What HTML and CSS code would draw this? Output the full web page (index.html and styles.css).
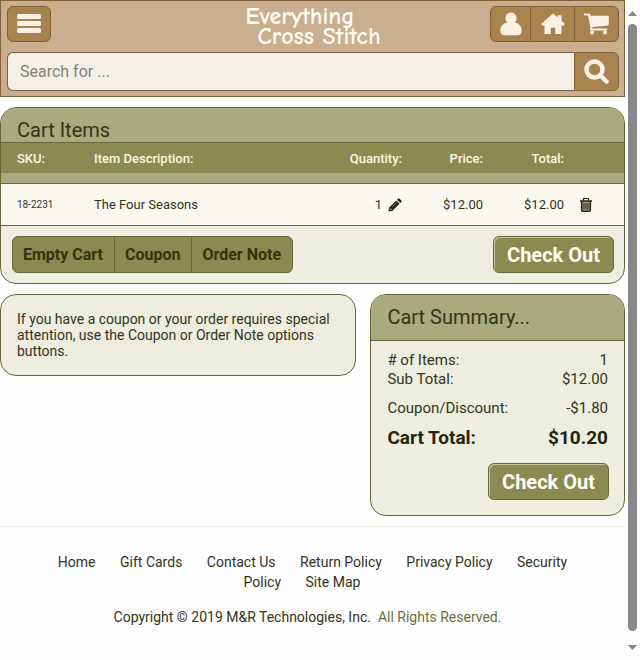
FILE: index.html
```html
<!DOCTYPE html>
<html lang="en">
<head>
  <meta charset="UTF-8" />
  <meta name="viewport" content="width=device-width, initial-scale=1" />
  <title>Everything Cross Stitch - Cart</title>

  <link rel="stylesheet" href="styles.css">
</head>
<body>

  <div id="page">
    <header id="site-header">
      <div class="header-bar">
        <button type="button" class="tan-btn menu-btn" aria-label="Menu">
          <svg width="24" height="20" viewBox="0 0 24 20" fill="#fbf1e6">
            <rect x="0" y="0" width="24" height="5" rx="1.5" />
            <rect x="0" y="7" width="24" height="5" rx="1.5" />
            <rect x="0" y="14" width="24" height="5" rx="1.5" />
          </svg>
        </button>

        <a href="#" class="logo">
          <span>Everything</span>
          <span class="logo-second">Cross Stitch</span>
        </a>

        <nav class="icon-group">
          <a href="#" class="tan-btn" aria-label="My Account">
            <svg width="22" height="24" viewBox="0 0 22 24" fill="#fbf1e6">
              <path d="M11 0.500C14.300 0.500 16.500 3 16.500 6.200C16.500 8 15.900 9.500 14.900 10.700C19 11 21.700 14 21.700 19C21.700 21.500 20 23.200 17.700 23.200H4.300C2 23.200 0.300 21.500 0.300 19C0.300 14 3 11 7.100 10.700C6.100 9.500 5.500 8 5.500 6.200C5.500 3 7.700 0.500 11 0.500Z" />
            </svg>
          </a>
          <a href="#" class="tan-btn" aria-label="Home">
            <svg width="24" height="22" viewBox="0 0 24 22" fill="#fbf1e6">
              <path d="M12 0.500L16.800 4.600V2.300H20.500V7.800L24 11L22.500 12.800H20.500V20.200Q20.500 21 19.700 21H14.300V14.800H9.700V21H4.300Q3.500 21 3.500 20.200V12.800H1.500L0 11Z" />
            </svg>
          </a>
          <a href="#" class="tan-btn" aria-label="Cart">
            <svg width="25" height="22" viewBox="0 0 25 22" fill="#fbf1e6">
              <path d="M1 0.500H5Q6 0.500 6.300 1.500L6.500 2.800H23.800Q24.800 2.800 24.800 3.800V11.300Q24.800 12.300 23.800 12.400L8.300 14L8.200 15.500H22.300Q23.300 15.500 23.300 16.500T22.300 17.500H7Q5.900 17.500 6 16.400L6.400 14.400L4 2.600H1Q0 2.600 0 1.500T1 0.500Z" />
              <circle cx="8" cy="19.500" r="2" />
              <circle cx="21" cy="19.500" r="2" />
            </svg>
          </a>
        </nav>
      </div>

      <form class="search-form">
        <input type="text" name="search" placeholder="Search for ..." aria-label="Search for" />
        <button type="button" class="tan-btn" aria-label="Search">
          <svg width="25" height="25" viewBox="0 0 25 25" fill="none" stroke="#fbf1e6">
            <circle cx="10.500" cy="10.500" r="8" stroke-width="4.500" />
            <path d="M16.500 16.500L22.500 22.500" stroke-width="4.500" stroke-linecap="round" />
          </svg>
        </button>
      </form>
    </header>

    <section id="cart" class="panel">
      <h1>Cart Items</h1>
      <table class="cart-table">
        <thead>
          <tr>
            <th class="col-sku">SKU:</th>
            <th>Item Description:</th>
            <th class="col-qty">Quantity:</th>
            <th class="col-money">Price:</th>
            <th class="col-money">Total:</th>
            <th class="col-delete"></th>
          </tr>
        </thead>
        <tbody>
          <tr>
            <td class="col-sku">18-2231</td>
            <td>The Four Seasons</td>
            <td class="col-qty">
              <span class="qty">
                1
                <a href="#" aria-label="Edit quantity">
                  <svg width="14" height="14" viewBox="0 0 14 14" fill="#25250f">
                    <path d="M10 0.700Q10.800 0 11.600 0.700L13.300 2.400Q14 3.200 13.300 4L12.300 5L9 1.700Z" />
                    <path d="M8.300 2.400L11.600 5.700L4.200 13.100L0.500 13.500L0.900 9.800Z" />
                    <path d="M2 10.500L3.500 12" stroke="#fbf8f1" />
                    <path d="M4 9L8.500 4.500" stroke="#8d8d78" stroke-width="0.800" />
                  </svg>
                </a>
              </span>
            </td>
            <td class="col-money">$12.00</td>
            <td class="col-money">$12.00</td>
            <td class="col-delete">
              <a href="#" aria-label="Remove item">
                <svg width="12" height="14" viewBox="0 0 12 14" fill="none" stroke="#25250f">
                  <path d="M1.700 3V12Q1.700 13.200 2.800 13.200H9.200Q10.300 13.200 10.300 12V3" fill="#a5a58e" stroke-width="1.600" />
                  <path d="M3.500 2.500V1Q3.500 0.500 4 0.500H8Q8.500 0.500 8.500 1V2.500" stroke-width="1.200" />
                  <path d="M0 3H12" stroke-width="1.600" />
                  <path d="M4 5V11.500M6 5V11.500M8 5V11.500" />
                </svg>
              </a>
            </td>
          </tr>
        </tbody>
      </table>

      <div class="cart-actions">
        <div class="btn-group">
          <button type="button">Empty Cart</button>
          <button type="button">Coupon</button>
          <button type="button">Order Note</button>
        </div>
        <button type="button" class="checkout-btn">Check Out</button>
      </div>
    </section>

    <div class="columns">
      <p class="panel note">If you have a coupon or your order requires special attention, use the Coupon or Order Note options buttons.</p>

      <section class="panel summary">
        <h2>Cart Summary...</h2>
        <dl>
          <div><dt># of Items:</dt><dd>1</dd></div>
          <div><dt>Sub Total:</dt><dd>$12.00</dd></div>
          <div class="discount"><dt>Coupon/Discount:</dt><dd>-$1.80</dd></div>
          <div class="total"><dt>Cart Total:</dt><dd>$10.20</dd></div>
        </dl>
        <button type="button" class="checkout-btn">Check Out</button>
      </section>
    </div>

    <footer>
      <nav>
        <a href="#">Home</a>
        <a href="#">Gift Cards</a>
        <a href="#">Contact Us</a>
        <a href="#">Return Policy</a>
        <a href="#">Privacy Policy</a>
        <a href="#">Security Policy</a>
        <a href="#">Site Map</a>
      </nav>
      <p>Copyright © 2019 M&amp;R Technologies, Inc. &nbsp;<span>All Rights Reserved.</span></p>
    </footer>
  </div>

  <div class="scrollbar" aria-hidden="true">
    <svg width="9" height="5" viewBox="0 0 9 5" fill="#85858a"><path d="M4.500 0L9 5H0Z" /></svg>
    <div class="thumb"></div>
    <svg width="9" height="5" viewBox="0 0 9 5" fill="#85858a"><path d="M0 0H9L4.500 5Z" /></svg>
  </div>

</body>
</html>
```

FILE: styles.css
```css
* {
  box-sizing: border-box;
}

body {
  margin: 0;
  display: flex;
  background: #fefefe;
  font-family: Roboto, "Liberation Sans", sans-serif;
  font-size: 14px;
  color: #33341a;
}

svg {
  display: block;
}

button {
  font-family: inherit;
  cursor: pointer;
}

#page {
  flex: 1;
  min-width: 0;
}

/* Header */
#site-header {
  background: #c9ae8f;
  border: 1px solid #7f5f38;
  padding: 5px 5px 5px 6px;
}

.header-bar {
  display: grid;
  grid-template-columns: 1fr auto 1fr;
  align-items: start;
  height: 46px;
}

.tan-btn {
  display: flex;
  align-items: center;
  justify-content: center;
  background: #a9834f;
  border: 1px solid #7f5f38;
  padding: 0;
}

.menu-btn {
  width: 44px;
  height: 36px;
  border-radius: 6px;
}

.logo {
  display: block;
  font-family: "Comic Neue", Lato, sans-serif;
  font-size: 24px;
  font-weight: bold;
  line-height: 20px;
  color: #fffaf2;
  text-decoration: none;
}

.logo span {
  display: block;
}

.logo .logo-second {
  padding-left: 12px;
}

.icon-group {
  display: flex;
  justify-self: end;
}

.icon-group .tan-btn {
  width: 45px;
  height: 36px;
  margin-left: -1px;
}

.icon-group .tan-btn:first-child {
  width: 41px;
  border-radius: 6px 0 0 6px;
}

.icon-group .tan-btn:last-child {
  border-radius: 0 6px 6px 0;
}

/* Search */
.search-form {
  display: flex;
  height: 39px;
}

.search-form input {
  flex: 1;
  min-width: 0;
  padding: 0 12px;
  background: #f4efe7;
  border: 1px solid #7f5f38;
  border-right: none;
  border-radius: 6px 0 0 6px;
  font-family: inherit;
  font-size: 16px;
}

.search-form input::placeholder {
  color: #858075;
}

.search-form .tan-btn {
  width: 45px;
  border-radius: 0 6px 6px 0;
}

/* Panels */
.panel {
  background: #edeedf;
  border: 1px solid #66683a;
  border-radius: 16px;
  overflow: hidden;
}

#cart {
  margin-top: 10px;
}

h1, h2 {
  margin: 0;
  padding: 0 16px;
  background: #a9aa80;
  font-size: 20px;
  font-weight: normal;
}

h1 {
  padding-top: 10px;
  line-height: 24px;
}

/* Cart table */
.cart-table {
  width: 100%;
  border-collapse: separate;
  border-spacing: 0;
  table-layout: fixed;
  font-size: 13px;
}

.cart-table th,
.cart-table td {
  padding: 0;
  text-align: left;
}

.cart-table th {
  height: 41px;
  background: #8a8b50;
  border-top: 1px solid #66683a;
  border-bottom: 10px solid #a9aa80;
  font-weight: 500;
  color: #fbf8e6;
}

.cart-table td {
  height: 43px;
  background: #fbf8f1;
  border-top: 1px solid #66683a;
  border-bottom: 1px solid #66683a;
}

.cart-table .col-sku {
  width: 93px;
  padding-left: 16px;
}

.cart-table td.col-sku {
  font-size: 10px;
}

.cart-table .col-qty {
  width: 100px;
  text-align: right;
}

.cart-table .col-money {
  width: 81px;
  text-align: right;
}

.cart-table .col-delete {
  width: 60px;
  padding-left: 16px;
}

.qty {
  display: flex;
  align-items: center;
  justify-content: flex-end;
  gap: 6px;
}

.cart-actions {
  display: flex;
  align-items: center;
  justify-content: space-between;
  padding: 10px 10px 10px 11px;
}

.btn-group {
  display: flex;
}

.btn-group button {
  height: 37px;
  padding: 0 11px 0 10px;
  margin-right: -1px;
  background: #8a8b50;
  border: 1px solid #66683a;
  font-size: 16px;
  font-weight: bold;
  color: #33340c;
}

.btn-group button:first-child {
  border-radius: 6px 0 0 6px;
}

.btn-group button:last-child {
  border-radius: 0 6px 6px 0;
}

.checkout-btn {
  height: 37px;
  padding: 0 13px;
  background: #8a8b50;
  border: 1px solid #66683a;
  border-radius: 6px;
  box-shadow: inset 1px 1px 0 #c9caa2;
  font-size: 20px;
  font-weight: bold;
  color: #fffdf5;
}

/* Note and summary */
.columns {
  display: grid;
  grid-template-columns: 7fr 5fr;
  gap: 14px;
  align-items: start;
  margin-top: 10px;
}

.note {
  margin: 0;
  padding: 16px;
  line-height: 16px;
}

.summary h2 {
  border-bottom: 1px solid #66683a;
  line-height: 45px;
}

.summary dl {
  margin: 0;
  padding: 10px 16px;
  font-size: 15px;
  line-height: 19px;
}

.summary dl div {
  display: flex;
  justify-content: space-between;
}

.summary dd {
  margin: 0;
}

.summary .discount {
  margin: 10px 0;
}

.summary .total {
  font-size: 19px;
  font-weight: bold;
  color: #25250f;
}

.summary .checkout-btn {
  display: block;
  margin: 6px 15px 15px auto;
}

/* Footer */
footer {
  margin-top: 10px;
  padding: 25px 10px 0 0;
  border-top: 1px solid #f0f0ea;
  line-height: 20px;
  text-align: center;
}

footer nav {
  padding: 0 40px;
}

footer a {
  margin: 0 11px 0 10px;
  color: #33341a;
  text-decoration: none;
}

footer p {
  margin: 15px 0;
}

footer span {
  color: #6c6e3d;
}

/* Scrollbar */
.scrollbar {
  position: sticky;
  top: 0;
  display: flex;
  flex-direction: column;
  align-items: center;
  gap: 8px;
  width: 15px;
  height: 100vh;
  padding: 11px 0 10px;
}

.scrollbar .thumb {
  flex: 1;
  width: 9px;
  margin-bottom: 6px;
  border-radius: 5px;
  background: #88888b;
}
```
